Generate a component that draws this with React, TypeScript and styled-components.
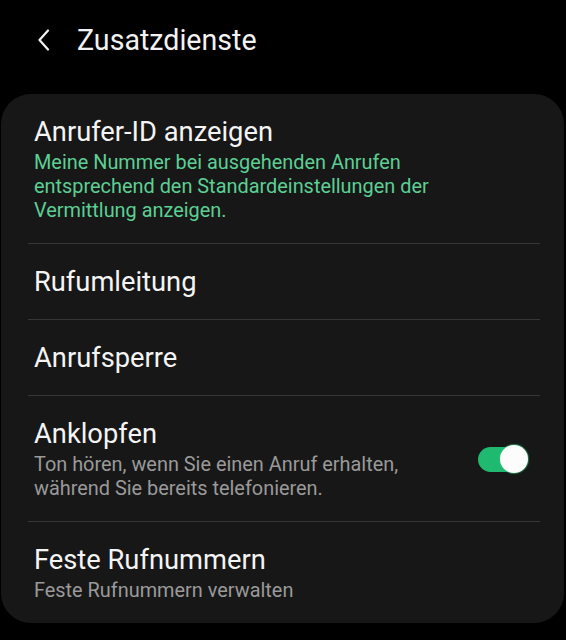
import React from "react";
import styled, { createGlobalStyle } from "styled-components";

const Global = createGlobalStyle`
  html, body {
    margin: 0;
    padding: 0;
    background: #000;
  }
  body {
    font-family: Roboto, "Noto Sans", sans-serif;
    -webkit-font-smoothing: antialiased;
  }
`;

const Screen = styled.div`
  width: 566px;
  height: 640px;
  background: #000;
  display: flex;
  flex-direction: column;
  overflow: hidden;
`;

const Header = styled.div`
  height: 94px;
  display: flex;
  align-items: flex-start;
  padding-top: 22px;
  box-sizing: border-box;
`;

const BackButton = styled.button`
  width: 34px;
  height: 36px;
  margin-left: 27px;
  padding: 0;
  border: 0;
  background: transparent;
  display: flex;
  align-items: center;
  justify-content: center;
`;

const HeaderTitle = styled.h1`
  margin: 0 0 0 16px;
  font-size: 28.6px;
  font-weight: 400;
  line-height: 36px;
  color: #f2f2f2;
`;

const Card = styled.div`
  margin: 0 2px 0 1px;
  background: #171717;
  border-radius: 30px;
  display: flex;
  flex-direction: column;
`;

const Row = styled.div<{ $last?: boolean }>`
  padding: 21px 33px 20px 33px;
  display: flex;
  align-items: center;
  gap: 16px;
  position: relative;
  &::after {
    content: "";
    display: ${(p) => (p.$last ? "none" : "block")};
    position: absolute;
    left: 27px;
    right: 24px;
    bottom: -1px;
    height: 1px;
    background: #363636;
  }
  & + & {
    margin-top: 1px;
  }
`;

const TextCol = styled.div`
  flex: 1;
  display: flex;
  flex-direction: column;
`;

const Title = styled.div`
  font-size: 27.3px;
  line-height: 34px;
  color: #f4f4f4;
`;

const Sub = styled.div<{ $accent?: boolean }>`
  margin-top: 2px;
  font-size: 19.9px;
  line-height: 24px;
  color: ${(p) => (p.$accent ? "#5ccf94" : "#9a9a9a")};
`;

const Toggle = styled.div`
  position: relative;
  width: 50px;
  height: 28px;
  margin-right: 3px;
  flex: none;
`;

const Track = styled.div`
  position: absolute;
  left: 0;
  top: 2px;
  width: 44px;
  height: 25px;
  border-radius: 13px;
  background: #1fba6f;
`;

const Knob = styled.div`
  position: absolute;
  right: 0;
  top: 0;
  width: 28px;
  height: 28px;
  border-radius: 50%;
  background: #fcfcfc;
  box-shadow: 0 0 1px 1px rgba(40, 200, 120, 0.6);
`;

const Chevron = () => (
  <svg width="14" height="22" viewBox="0 0 14 22">
    <path d="M11 1.5 L2.5 11 L11 20.5" fill="none" stroke="#f2f2f2" strokeWidth="2.2" strokeLinecap="round" strokeLinejoin="round" />
  </svg>
);

type Item = { title: string; lines?: string[]; accent?: boolean; toggle?: boolean };

const items: Item[] = [
  {
    title: "Anrufer-ID anzeigen",
    lines: [
      "Meine Nummer bei ausgehenden Anrufen",
      "entsprechend den Standardeinstellungen der",
      "Vermittlung anzeigen.",
    ],
    accent: true,
  },
  { title: "Rufumleitung" },
  { title: "Anrufsperre" },
  {
    title: "Anklopfen",
    lines: ["Ton hören, wenn Sie einen Anruf erhalten,", "während Sie bereits telefonieren."],
    toggle: true,
  },
  { title: "Feste Rufnummern", lines: ["Feste Rufnummern verwalten"] },
];

export default function App() {
  return (
    <Screen>
      <Global />
      <Header>
        <BackButton aria-label="Zurück">
          <Chevron />
        </BackButton>
        <HeaderTitle>Zusatzdienste</HeaderTitle>
      </Header>
      <Card>
        {items.map((it, i) => (
          <Row key={it.title} $last={i === items.length - 1}>
            <TextCol>
              <Title>{it.title}</Title>
              {it.lines && (
                <Sub $accent={it.accent}>
                  {it.lines.map((l, j) => (
                    <React.Fragment key={j}>
                      {j > 0 && <br />}
                      {l}
                    </React.Fragment>
                  ))}
                </Sub>
              )}
            </TextCol>
            {it.toggle && (
              <Toggle>
                <Track />
                <Knob />
              </Toggle>
            )}
          </Row>
        ))}
      </Card>
    </Screen>
  );
}
